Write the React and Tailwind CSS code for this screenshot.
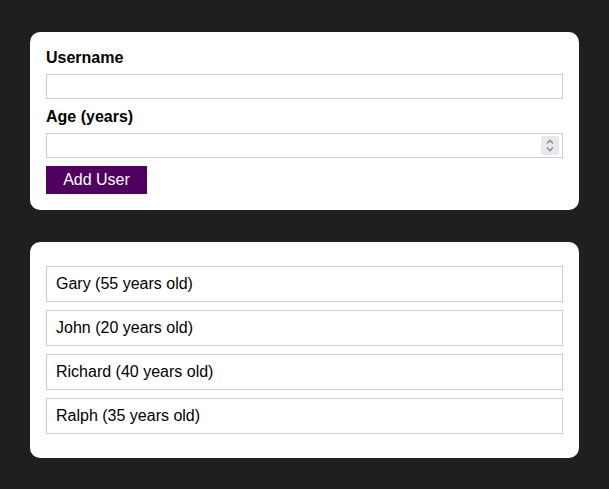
import { useState } from "react";

const INITIAL_USERS = [
  { id: 1, name: "Gary", age: 55 },
  { id: 2, name: "John", age: 20 },
  { id: 3, name: "Richard", age: 40 },
  { id: 4, name: "Ralph", age: 35 },
];

function Card({ className = "", children }) {
  return <div className={`bg-white rounded-[10px] px-4 ${className}`}>{children}</div>;
}

function AddUserForm({ onAdd }) {
  const [username, setUsername] = useState("");
  const [age, setAge] = useState("");

  const handleSubmit = (e) => {
    e.preventDefault();
    if (!username.trim() || !age.trim()) return;
    onAdd(username, Number(age));
    setUsername("");
    setAge("");
  };

  return (
    <Card className="py-4">
      <form onSubmit={handleSubmit}>
        <label htmlFor="username" className="block font-bold text-[16px] leading-[18px] pt-px -mb-px text-black">
          Username
        </label>
        <input
          id="username"
          type="text"
          value={username}
          onChange={(e) => setUsername(e.target.value)}
          className="block w-full h-[25px] mt-2 border border-[#ccc] px-1 outline-none"
        />
        <label htmlFor="age" className="block font-bold text-[16px] leading-[18px] text-black mt-2 pt-px -mb-px">
          Age (years)
        </label>
        <div className="relative mt-2">
          <input
            id="age"
            type="text"
            inputMode="numeric"
            value={age}
            onChange={(e) => setAge(e.target.value)}
            className="block w-full h-[25px] border border-[#ccc] px-1 outline-none"
          />
          {/* spinner, drawn so it matches the hovered state */}
          <div className="absolute right-[4px] top-[3px] w-[18px] h-[19px] bg-[#e9e9ed] rounded-[2px] flex flex-col items-center justify-center gap-[3px]">
            <svg width="8" height="5" viewBox="0 0 8 5" fill="none" stroke="#85858f" strokeWidth="1.3">
              <path d="M1 4.5 L4 1.2 L7 4.5" />
            </svg>
            <svg width="8" height="5" viewBox="0 0 8 5" fill="none" stroke="#85858f" strokeWidth="1.3">
              <path d="M1 0.5 L4 3.8 L7 0.5" />
            </svg>
          </div>
        </div>
        <button
          type="submit"
          className="mt-2 h-[28px] w-[101px] bg-[#4f005f] text-white text-[16px] leading-[18px]"
        >
          Add User
        </button>
      </form>
    </Card>
  );
}

function UserList({ users }) {
  return (
    <Card className="py-6">
      <ul className="flex flex-col gap-2">
        {users.map((u) => (
          <li
            key={u.id}
            className="h-[36px] flex items-center border border-[#ccc] px-[9px] text-[16px] text-black"
          >
            {u.name} ({u.age} years old)
          </li>
        ))}
      </ul>
    </Card>
  );
}

export default function App() {
  const [users, setUsers] = useState(INITIAL_USERS);

  const addUser = (name, age) => {
    setUsers((prev) => [...prev, { id: Date.now(), name, age }]);
  };

  return (
    <div
      className="min-h-screen bg-[#1f1f1f] px-[30px] pt-[32px] pb-8 flex flex-col gap-8"
      style={{ fontFamily: '"Liberation Sans", Arial, sans-serif' }}
    >
      <AddUserForm onAdd={addUser} />
      <UserList users={users} />
    </div>
  );
}
